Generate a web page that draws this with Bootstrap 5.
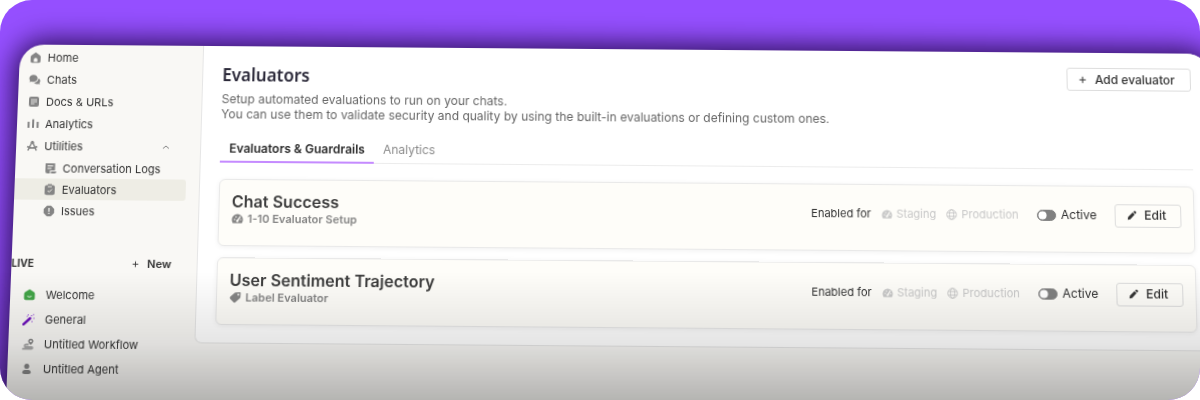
<!DOCTYPE html>
<html lang="en">
<head>
<meta charset="utf-8">
<meta name="viewport" content="width=device-width, initial-scale=1">
<title>Evaluators</title>
<link href="https://cdn.jsdelivr.net/npm/bootstrap@5.3.0/dist/css/bootstrap.min.css" rel="stylesheet">
<style>
  body { background: #fff; font-family: Inter, "Liberation Sans", sans-serif; font-size: 11px; line-height: 14px; color: #333; }
  svg { display: block; flex: none; }
  .stage { position: relative; background: #954fff; border-radius: 32px; }
  .stage::after { content: ""; position: absolute; inset: 0; pointer-events: none;
    background: linear-gradient(to bottom, rgba(0,0,0,0) 68%, rgba(0,0,0,.1) 86%, rgba(0,0,0,.27) 100%); }
  /* the whole app window leans slightly towards the viewer */
  .app-window { margin: 50px -10px -40px 20px; background: #f9f8f5; border-radius: 24px; overflow: hidden; box-shadow: 0 0 28px 4px rgba(20,0,50,.85);
    transform-origin: 59% 0; transform: perspective(923px) rotateX(3deg) skewY(.45deg); }
  .side { width: 183px; flex: none; padding-top: 2px; }
  .side a { display: flex; align-items: center; height: 22px; padding-left: 10px; color: #333; text-decoration: none; }
  .side a svg { width: 12px; height: 12px; margin-right: 6px; color: #858585; }
  .side .sub a { height: 21px; padding-left: 29px; margin-right: 13px; }
  .side .sub a.active { background: #eeede5; border-radius: 0 3px 3px 0; }
  .side .flows a { height: 24px; padding-left: 13px; }
  .side .flows svg { margin-right: 10px; }
  .side a .chev { margin: 0 30px 0 auto; width: 8px; height: 8px; }
  .live-row { height: 22px; margin-top: 30px; padding-right: 25px; font-weight: 600; }
  .live-row h2 { font-size: 10px; font-weight: 700; line-height: 14px; }
  .plain { border: 0; background: none; padding: 0; font-weight: 600; color: #333; display: flex; align-items: center; gap: 8px; }
  .page { background: #fff; border: 1px solid #e6e6e6; border-width: 0 0 1px 1px; border-bottom-left-radius: 7px; padding: 15px 20px 17px 19px; }
  .page h1 { font: 600 17px/24px "Noto Sans", sans-serif; color: #2c2a3a; margin: 2px 0 4px; }
  .intro { color: #666; font-size: 12px; line-height: 15px; }
  .line-btn { display: flex; align-items: center; height: 23px; border: 1px solid #ddd; border-radius: 3px; background: #fff; color: #333; font-size: 12px; font-weight: 500; padding: 0 15px 0 11px; gap: 8px; }
  .tabs { margin: 16px 0; border-bottom: 1px solid #ececec; font-size: 12px; }
  .tabs a { color: #8c8c8c; text-decoration: none; padding: 4px 9px 5px; border-bottom: 2px solid transparent; margin-bottom: -1px; }
  .tabs a.active { color: #292929; font-weight: 600; border-color: #c58bff; }
  .eval { background: #fefdf9; border: 1px solid #e9e9e9; border-radius: 6px; height: 66px; padding: 11px 12px; box-shadow: 0 1px 5px rgba(0,0,0,.06); }
  .eval + .eval { margin-top: 11px; }
  .eval h3 { font-size: 16px; line-height: 20px; font-weight: 600; color: #3d3d3d; margin: 0; }
  .kind { color: #858585; font-weight: 600; }
  .controls { height: 34px; gap: 10px; }
  .env { color: #c8c8c8; }
  .eval .form-switch { min-height: 0; padding: 0; margin: 0 8px; gap: 5px; font-size: 12px; }
  .eval .form-check-input { float: none; margin: 0; width: 19px; height: 11px; border-color: #808080; background-color: #808080;
    background-image: url("data:image/svg+xml,%3csvg xmlns='http://www.w3.org/2000/svg' viewBox='-4 -4 8 8'%3e%3ccircle r='3.6' fill='%23fff'/%3e%3c/svg%3e"); }
  .eval .line-btn { background: transparent; gap: 7px; padding-right: 14px; }
</style>
</head>
<body>
<svg class="d-none" xmlns="http://www.w3.org/2000/svg">
  <symbol id="gauge" viewBox="0 0 12 12"><path fill="currentColor" fill-rule="evenodd" d="M6 1.5a5.5 5.5 0 0 0-5.5 5.6c0 1.4.4 2.4 1 3.4h9c.6-1 1-2 1-3.4A5.5 5.5 0 0 0 6 1.500zM2.700 6.200h1.200v1.200H2.700zM4 3.800h1.200V5H4zM8.600 3.300l.8.7-2.200 3.900c.2 1-.4 1.600-1.200 1.600s-1.400-.7-1.200-1.400 .7-1 1.200-1zM8.900 6.500h1v1h-1z"/></symbol>
  <symbol id="globe" viewBox="0 0 12 12"><g fill="none" stroke="currentColor"><circle cx="6" cy="6" r="5.200"/><ellipse cx="6" cy="6" rx="2.300" ry="5.200"/><path d="M1.200 4.200h9.600M1.200 7.800h9.600"/></g></symbol>
  <symbol id="pencil" viewBox="0 0 10 10"><path fill="currentColor" d="M.8 9.200l.5-2.600 4.600-4.500 2 2-4.500 4.600zM6.500 1.500l.9-.8c.3-.3.700-.3 1 0l.9.9c.3.300.3.700 0 1l-.8.9z"/></symbol>
  <symbol id="plus" viewBox="0 0 8 8"><path fill="none" stroke="currentColor" d="M4 .8v6.400M.8 4h6.400"/></symbol>
</svg>
<div class="stage d-flex flex-column min-vh-100 overflow-hidden">
  <div class="app-window d-flex flex-grow-1 align-items-start">
    <nav class="side" aria-label="Main">
      <a href="#"><svg viewBox="0 0 12 12"><path fill="currentColor" fill-rule="evenodd" d="M6 .8L1.800 3.800Q1 4.500 1 5.400v4.200q0 1.600 1.600 1.600h6.800q1.600 0 1.600-1.600V5.400q0-.9-.8-1.600zM4.200 10.200V8a1.800 1.800 0 0 1 3.600 0v2.200z"/></svg>Home</a>
      <a href="#"><svg viewBox="0 0 12 12"><path fill="currentColor" d="M4.600 1.300C2.300 1.300.5 2.800.5 4.800c0 .9.3 1.600.8 2.200L.7 8.600l2-.6c3 .9 6-.6 6-3.200 0-2-1.800-3.500-4.100-3.500z"/><path fill="currentColor" d="M9.500 4.700c.1 2.400-1.800 4-4.300 4.300.8 1.300 2.600 1.700 4.200 1.200l1.900.5-.6-1.400c1.400-1.600.8-3.900-1.200-4.600z"/></svg>Chats</a>
      <a href="#"><svg viewBox="0 0 12 12"><rect x="1" y="1" width="10" height="10" rx="2" fill="currentColor"/><path d="M3 4h6M3 6h6M3 8h3.500" stroke="#f9f8f5" stroke-width=".8"/></svg>Docs &amp; URLs</a>
      <a href="#"><svg viewBox="0 0 12 12"><path d="M1.500 4v6M6 1.500V10M10.500 4v6" stroke="currentColor" stroke-width="2"/></svg>Analytics</a>
      <a href="#"><svg viewBox="0 0 12 12"><path d="M6 1.500L1.800 10.500M6 1.500l4.200 9M1 6.500q5 3 10 0" fill="none" stroke="currentColor" stroke-width="1.500"/><circle cx="6" cy="2.200" r="1.500" fill="currentColor"/></svg>Utilities<svg class="chev" viewBox="0 0 8 8"><path d="M1 5.500l3-2.500 3 2.500" fill="none" stroke="currentColor"/></svg></a>
      <div class="sub">
        <a href="#"><svg viewBox="0 0 12 12"><path fill="currentColor" fill-rule="evenodd" d="M1 1h9.500v7H5.500v3H3Q1 11 1 9zM3 3v1h5.500V3zM3 5.500v1h4v-1zM6.500 9H12q0 2-2 2H6.500z"/></svg>Conversation Logs</a>
        <a href="#" class="active" aria-current="page"><svg viewBox="0 0 12 12"><rect x="1" y="1.500" width="10" height="9.800" rx="2" fill="currentColor"/><path d="M4 .5h4v2H4z" fill="currentColor"/><path d="M4 3h4M4 7l1.500 1.400L8.200 5.500" fill="none" stroke="#eeede5"/></svg>Evaluators</a>
        <a href="#"><svg viewBox="0 0 12 12"><path fill="currentColor" d="M4 .8h4L11.200 4v4L8 11.200H4L.8 8V4z"/><path d="M6 3v3.800M6 7.800V9" stroke="#f9f8f5" stroke-width="1.200"/></svg>Issues</a>
      </div>
      <div class="live-row d-flex align-items-center justify-content-between">
        <h2 class="m-0">LIVE</h2>
        <button class="plain" type="button"><svg width="7" height="7"><use href="#plus"/></svg>New</button>
      </div>
      <div class="flows mt-2">
        <a href="#"><svg viewBox="0 0 12 12"><path fill="#43a548" d="M6 .8L1.600 3.500Q.7 4.200.7 5.500v4q0 1.800 1.800 1.800h7q1.800 0 1.800-1.800v-4q0-1.300-.9-2z"/><path d="M3.800 7.500q2.200 1.600 4.400 0" fill="none" stroke="#dff0df"/></svg>Welcome</a>
        <a href="#"><svg viewBox="0 0 12 12"><path d="M1.200 10.800L7.500 5" stroke="#6a0dba" stroke-width="2.400" stroke-linecap="round"/><path d="M5.500 1v1.500M8 2.500h1.500M10.800.8v1.400M10.500 5H12M9.500 7.500V9M4 3.200h1" stroke="#a666dd"/></svg>General</a>
        <a href="#"><svg viewBox="0 0 12 12"><path fill="currentColor" fill-rule="evenodd" d="M9 .8a2.500 2.500 0 0 0-2.500 2.500C6.500 4.800 9 7 9 7s2.500-2.200 2.500-3.700A2.500 2.500 0 0 0 9 .8zm0 1.500a1 1 0 1 1 0 2 1 1 0 0 1 0-2z"/><path d="M7 6.500H4.500a1 1 0 0 0 0 2.500H10a.8.8 0 0 1 0 1.600H.8" fill="none" stroke="#a8a8a8" stroke-width="1.900"/></svg>Untitled Workflow</a>
        <a href="#"><svg viewBox="0 0 12 12" color="#707070"><circle cx="6" cy="3.500" r="2.500" fill="currentColor"/><path fill="currentColor" d="M1.800 9.500Q1.800 7 4 7h4q2.200 0 2.200 2.500Q10.200 11 6 11T1.800 9.500z"/></svg>Untitled Agent</a>
      </div>
    </nav>
    <main class="page flex-grow-1">
      <div class="d-flex justify-content-between align-items-start">
        <div>
          <h1>Evaluators</h1>
          <p class="intro m-0">Setup automated evaluations to run on your chats.<br>You can use them to validate security and quality by using the built-in evaluations or defining custom ones.</p>
        </div>
        <button class="line-btn" type="button"><svg width="8" height="8"><use href="#plus"/></svg>Add evaluator</button>
      </div>
      <nav class="tabs d-flex" aria-label="Sections">
        <a href="#" class="active" aria-current="true">Evaluators &amp; Guardrails</a>
        <a href="#">Analytics</a>
      </nav>
      <section class="eval d-flex justify-content-between">
        <div>
          <h3>Chat Success</h3>
          <div class="kind d-flex align-items-center gap-1"><svg width="12" height="12"><use href="#gauge"/></svg>1-10 Evaluator Setup</div>
        </div>
        <div class="controls d-flex align-items-center">
          <span>Enabled for</span>
          <span class="env d-flex align-items-center gap-1"><svg width="11" height="11"><use href="#gauge"/></svg>Staging</span>
          <span class="env d-flex align-items-center gap-1"><svg width="11" height="11"><use href="#globe"/></svg>Production</span>
          <div class="form-check form-switch d-flex align-items-center"><input class="form-check-input" type="checkbox" role="switch" id="active-chat"><label for="active-chat">Active</label></div>
          <button class="line-btn" type="button"><svg width="10" height="10"><use href="#pencil"/></svg>Edit</button>
        </div>
      </section>
      <section class="eval d-flex justify-content-between">
        <div>
          <h3>User Sentiment Trajectory</h3>
          <div class="kind d-flex align-items-center gap-1"><svg width="12" height="12" viewBox="0 0 12 12"><path fill="currentColor" fill-rule="evenodd" d="M6.500 1.200L10.500 1q.8 0 .8.800l-.2 4q0 .6-.4 1L6.300 10.800q-1 .8-2 0L1 7.500q-.8-1 0-2L5.500 1.600q.4-.4 1-.4zM9 2.500a.9.9 0 1 0 .01 0z"/></svg>Label Evaluator</div>
        </div>
        <div class="controls d-flex align-items-center">
          <span>Enabled for</span>
          <span class="env d-flex align-items-center gap-1"><svg width="11" height="11"><use href="#gauge"/></svg>Staging</span>
          <span class="env d-flex align-items-center gap-1"><svg width="11" height="11"><use href="#globe"/></svg>Production</span>
          <div class="form-check form-switch d-flex align-items-center"><input class="form-check-input" type="checkbox" role="switch" id="active-sentiment"><label for="active-sentiment">Active</label></div>
          <button class="line-btn" type="button"><svg width="10" height="10"><use href="#pencil"/></svg>Edit</button>
        </div>
      </section>
    </main>
  </div>
</div>
<script src="https://cdn.jsdelivr.net/npm/bootstrap@5.3.0/dist/js/bootstrap.bundle.min.js"></script>
</body>
</html>
